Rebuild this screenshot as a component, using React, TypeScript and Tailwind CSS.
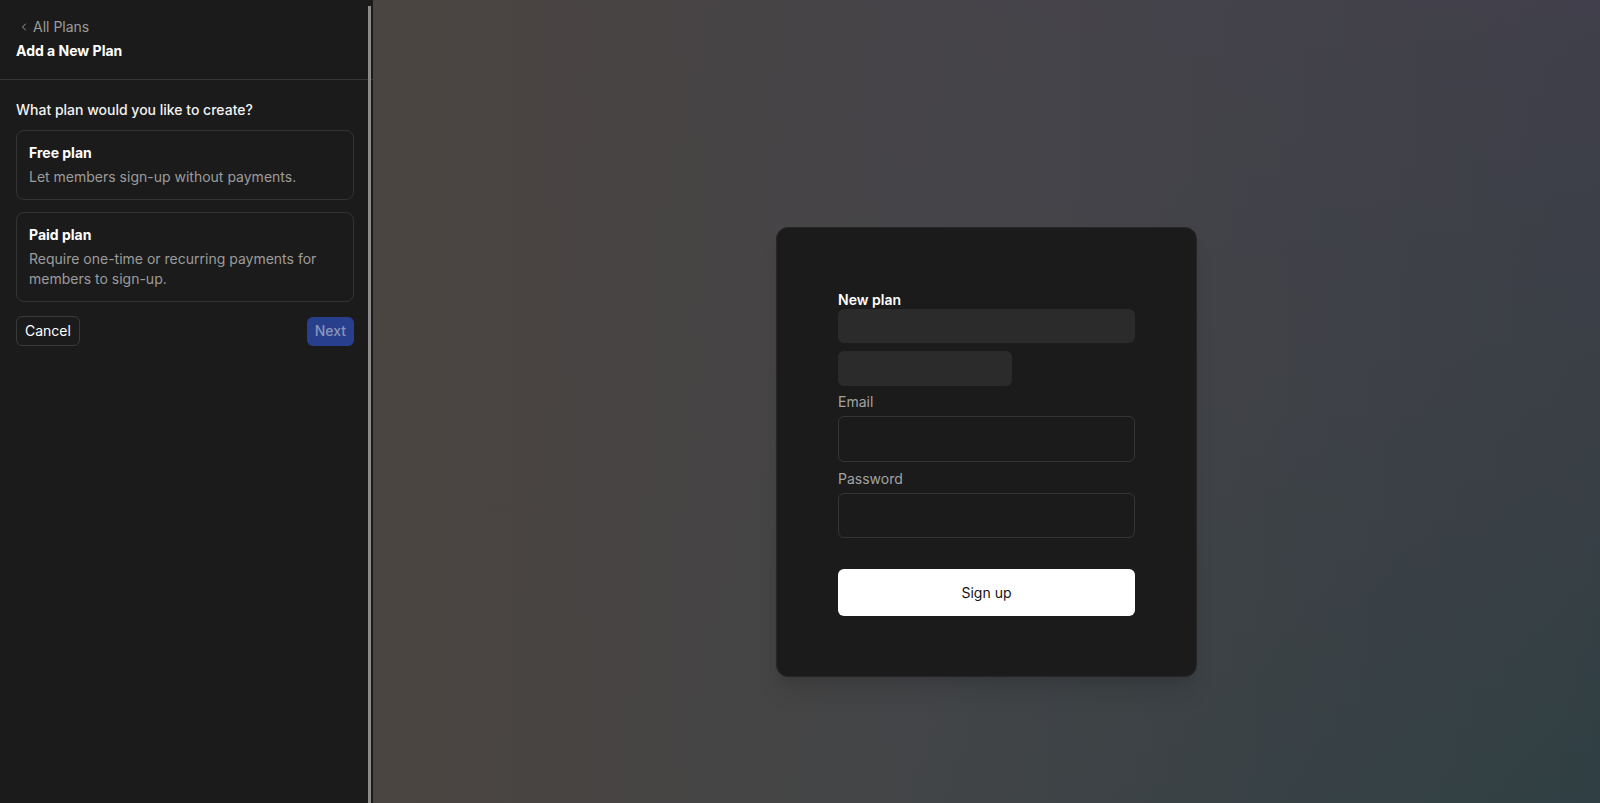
import { ChevronLeft } from "lucide-react";

type PlanOption = {
  title: string;
  description: string;
};

const planOptions: PlanOption[] = [
  { title: "Free plan", description: "Let members sign-up without payments." },
  {
    title: "Paid plan",
    description: "Require one-time or recurring payments for members to sign-up.",
  },
];

function Sidebar() {
  return (
    <aside className="relative flex h-full w-[373px] shrink-0 flex-col bg-[#1b1b1b]">
      <div className="border-b border-[#363636] px-4 pt-[17px] pb-[18px]">
        <button
          type="button"
          className="flex h-5 items-center gap-[3px] pl-[2px] text-sm text-[#9b9b9b]"
        >
          <ChevronLeft size={12} strokeWidth={2} />
          All Plans
        </button>
        <h1 className="mt-1 text-sm leading-5 font-bold text-white">Add a New Plan</h1>
      </div>

      <div className="flex w-[370px] flex-col px-4 pt-5">
        <p className="text-sm leading-5 font-medium text-[#f2f2f2]">
          What plan would you like to create?
        </p>
        <div className="mt-[10px] flex flex-col gap-3">
          {planOptions.map((plan) => (
            <div
              key={plan.title}
              className="rounded-lg border border-[#333333] px-3 py-3"
            >
              <p className="text-sm leading-5 font-bold text-white">{plan.title}</p>
              <p className="mt-1 text-sm leading-5 text-[#9c9c9c]">{plan.description}</p>
            </div>
          ))}
        </div>
        <div className="mt-[14px] flex items-center justify-between">
          <button
            type="button"
            className="h-[30px] rounded-md border border-[#3a3a3a] px-2 text-sm text-white"
          >
            Cancel
          </button>
          <button
            type="button"
            className="h-[29px] rounded-md bg-[#283f8e] px-2 text-sm font-medium text-[#8a94b8]"
          >
            Next
          </button>
        </div>
      </div>

      {/* scrollbar */}
      <div className="absolute top-[6px] bottom-0 left-[368px] w-[3px] bg-[#8c8c8c]" />
    </aside>
  );
}

function SignupCard() {
  return (
    <div className="w-[421px] rounded-xl border border-[#262626] bg-[#1b1b1b] px-[61px] pt-[64px] pb-[60px] shadow-xl">
      <p className="text-sm leading-4 font-semibold text-white">New plan</p>
      <div className="mt-px h-[34px] w-full rounded-md bg-[#2b2b2b]" />
      <div className="mt-2 h-[35px] w-[174px] rounded-md bg-[#2b2b2b]" />
      <label className="mt-[6px] block text-sm leading-5 text-[#a3a3a3]">Email</label>
      <div className="mt-1 h-[46px] w-full rounded-md border border-[#353535]" />
      <label className="mt-[7px] block text-sm leading-5 text-[#a3a3a3]">Password</label>
      <div className="mt-1 h-[45px] w-full rounded-md border border-[#353535]" />
      <button
        type="button"
        className="mt-[31px] h-[47px] w-full rounded-md bg-white text-sm text-[#141414]"
      >
        Sign up
      </button>
    </div>
  );
}

export default function App() {
  return (
    <div className="flex h-[803px] w-full overflow-hidden font-['Inter',sans-serif]">
      <Sidebar />
      <main className="flex flex-1 items-start justify-center bg-[linear-gradient(to_right,#4b4541_0%,rgba(72,70,72,0.75)_45%,rgba(70,70,72,0)_100%),linear-gradient(to_bottom,#403f4b_0%,#3a3f46_50%,#2f3f43_100%)] pt-[227px]">
        <SignupCard />
      </main>
    </div>
  );
}
